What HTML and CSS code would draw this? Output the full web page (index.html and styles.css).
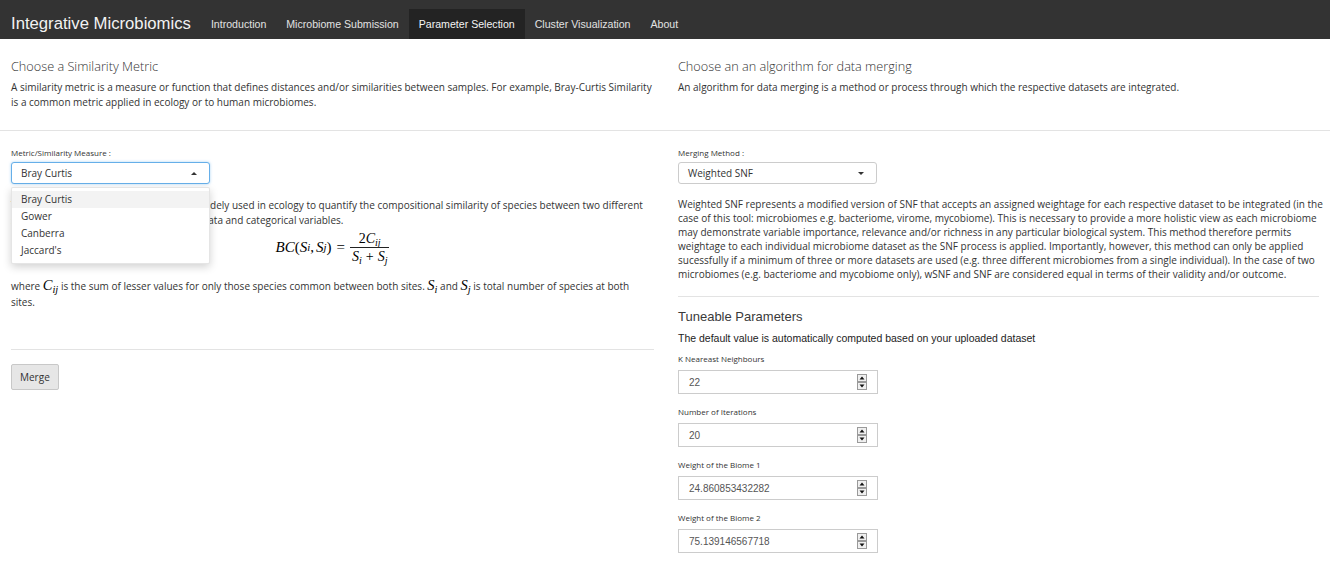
FILE: index.html
```html
<!DOCTYPE html>
<html lang="en">
<head>
<meta charset="utf-8">
<title>Integrative Microbiomics</title>
<link rel="stylesheet" href="styles.css">
</head>
<body>
<nav class="navbar">
  <span class="brand">Integrative Microbiomics</span>
  <ul class="nav">
    <li>Introduction</li>
    <li>Microbiome Submission</li>
    <li class="active">Parameter Selection</li>
    <li>Cluster Visualization</li>
    <li>About</li>
  </ul>
</nav>

<main class="page">
  <div class="row top-row">
    <section class="col col-left">
      <h4 class="title">Choose a Similarity Metric</h4>
      <p class="text">A similarity metric is a measure or function that defines distances and/or similarities between samples. For example, Bray-Curtis Similarity is a common metric applied in ecology or to human microbiomes.</p>
    </section>
    <section class="col col-right">
      <h4 class="title">Choose an an algorithm for data merging</h4>
      <p class="text">An algorithm for data merging is a method or process through which the respective datasets are integrated.</p>
    </section>
  </div>

  <hr class="rule-full">

  <div class="row bottom-row">
    <section class="col col-left">
      <label class="field-label">Metric/Similarity Measure :</label>
      <div class="select-wrap">
        <div class="select focused"><span>Bray Curtis</span><span class="caret up"></span></div>
        <ul class="menu">
          <li class="hover">Bray Curtis</li>
          <li>Gower</li>
          <li>Canberra</li>
          <li>Jaccard's</li>
        </ul>
      </div>
      <p class="text desc">The Bray-Curtis dissimilarity is a statistic widely used in ecology to quantify the compositional similarity of species between two different sites, and it is well suited for a numerical data and categorical variables.</p>
      <div class="formula">
        <span class="mi">BC</span><span class="mo">(</span><span class="mi">S</span><sub>i</sub><span class="mo comma">,</span><span class="mi">S</span><sub>j</sub><span class="mo">)</span><span class="mo eq">=</span><span class="frac"><span class="num">2<span class="mi">C</span><sub>ij</sub></span><span class="den"><span class="mi">S</span><sub>i</sub><span class="mo plus">+</span><span class="mi">S</span><sub>j</sub></span></span>
      </div>
      <p class="text where">where <span class="imath"><span class="mi">C</span><sub>ij</sub></span> is the sum of lesser values for only those species common between both sites. <span class="imath"><span class="mi">S</span><sub>i</sub></span> and <span class="imath"><span class="mi">S</span><sub>j</sub></span> is total number of species at both sites.</p>
      <hr class="rule-col">
      <button class="btn">Merge</button>
    </section>

    <section class="col col-right">
      <label class="field-label">Merging Method :</label>
      <div class="select"><span>Weighted SNF</span><span class="caret down"></span></div>
      <p class="text desc2">Weighted SNF represents a modified version of SNF that accepts an assigned weightage for each respective dataset to be integrated (in the case of this tool: microbiomes e.g. bacteriome, virome, mycobiome). This is necessary to provide a more holistic view as each microbiome may demonstrate variable importance, relevance and/or richness in any particular biological system. This method therefore permits weightage to each individual microbiome dataset as the SNF process is applied. Importantly, however, this method can only be applied sucessfully if a minimum of three or more datasets are used (e.g. three different microbiomes from a single individual). In the case of two microbiomes (e.g. bacteriome and mycobiome only), wSNF and SNF are considered equal in terms of their validity and/or outcome.</p>
      <hr class="rule-col rule-right">
      <h4 class="subtitle">Tuneable Parameters</h4>
      <p class="hint">The default value is automatically computed based on your uploaded dataset</p>

      <div class="group first">
        <label class="field-label">K Neareast Neighbours</label>
        <div class="num-input"><span class="val">22</span><svg class="spin" width="10" height="16" viewBox="0 0 10 16"><rect x="0.5" y="0.5" width="9" height="7" fill="#f0f0f0" stroke="#9a9a9a"/><rect x="0.5" y="8.5" width="9" height="7" fill="#f0f0f0" stroke="#9a9a9a"/><path d="M2.5 5.5 L5 2.5 L7.5 5.5 Z" fill="#111"/><path d="M2.5 10.5 L5 13.5 L7.5 10.5 Z" fill="#111"/></svg></div>
      </div>
      <div class="group">
        <label class="field-label">Number of Iterations</label>
        <div class="num-input"><span class="val">20</span><svg class="spin" width="10" height="16" viewBox="0 0 10 16"><rect x="0.5" y="0.5" width="9" height="7" fill="#f0f0f0" stroke="#9a9a9a"/><rect x="0.5" y="8.5" width="9" height="7" fill="#f0f0f0" stroke="#9a9a9a"/><path d="M2.5 5.5 L5 2.5 L7.5 5.5 Z" fill="#111"/><path d="M2.5 10.5 L5 13.5 L7.5 10.5 Z" fill="#111"/></svg></div>
      </div>
      <div class="group">
        <label class="field-label">Weight of the Biome 1</label>
        <div class="num-input"><span class="val">24.860853432282</span><svg class="spin" width="10" height="16" viewBox="0 0 10 16"><rect x="0.5" y="0.5" width="9" height="7" fill="#f0f0f0" stroke="#9a9a9a"/><rect x="0.5" y="8.5" width="9" height="7" fill="#f0f0f0" stroke="#9a9a9a"/><path d="M2.5 5.5 L5 2.5 L7.5 5.5 Z" fill="#111"/><path d="M2.5 10.5 L5 13.5 L7.5 10.5 Z" fill="#111"/></svg></div>
      </div>
      <div class="group">
        <label class="field-label">Weight of the Biome 2</label>
        <div class="num-input"><span class="val">75.139146567718</span><svg class="spin" width="10" height="16" viewBox="0 0 10 16"><rect x="0.5" y="0.5" width="9" height="7" fill="#f0f0f0" stroke="#9a9a9a"/><rect x="0.5" y="8.5" width="9" height="7" fill="#f0f0f0" stroke="#9a9a9a"/><path d="M2.5 5.5 L5 2.5 L7.5 5.5 Z" fill="#111"/><path d="M2.5 10.5 L5 13.5 L7.5 10.5 Z" fill="#111"/></svg></div>
      </div>
    </section>
  </div>
</main>
</body>
</html>
```

FILE: styles.css
```css
* { box-sizing: border-box; }

body {
  margin: 0;
  font-family: "Open Sans", "DejaVu Sans", sans-serif;
  font-size: 10px;
  color: #333;
  background: #fff;
}

/* Navbar */
.navbar {
  display: flex;
  height: 39px;
  padding-top: 9px;
  background: #333;
  font-family: "Liberation Sans", Arial, sans-serif;
}
.brand {
  padding: 0 10px 0 11px;
  font-size: 16.7px;
  line-height: 30px;
  color: #f2f2f2;
}
.nav {
  display: flex;
  list-style: none;
  margin: 0;
  padding: 0;
}
.nav li {
  padding: 0 10px;
  font-size: 10.6px;
  line-height: 30px;
  color: #e2e2e2;
}
.nav li.active {
  background: #232323;
  color: #f4f4f4;
}

/* Layout */
.row {
  display: grid;
  grid-template-columns: 1fr 1fr;
}
.col {
  min-width: 0;
}
.col-left { padding: 0 11px 0 11px; }
.col-right { padding: 0 5px 0 13px; }
.top-row { padding-top: 19px; }
.bottom-row { padding-top: 16px; }

.title {
  margin: 0 0 6px;
  font-size: 12.7px;
  font-weight: 300;
  line-height: 16px;
  color: #333;
}
.text {
  margin: 0;
  line-height: 14.5px;
}
.rule-full {
  margin: 21px 0 0;
  border: 0;
  border-top: 1px solid #e3e3e3;
}

/* Form controls */
.field-label {
  display: block;
  font-size: 8px;
  line-height: 12px;
  margin-bottom: 3px;
}
.select-wrap { position: relative; }
.select {
  display: flex;
  align-items: center;
  justify-content: space-between;
  width: 199px;
  height: 22px;
  padding: 0 12px 0 9px;
  border: 1px solid #ccc;
  border-radius: 3px;
  background: #fff;
  font-size: 10px;
  color: #333;
}
.select.focused {
  border-color: #66afe9;
  box-shadow: 0 0 3px rgba(102, 175, 233, 0.55);
}
.caret {
  width: 0;
  height: 0;
  border-left: 3px solid transparent;
  border-right: 3px solid transparent;
}
.caret.down { border-top: 3px solid #333; }
.caret.up { border-bottom: 3px solid #333; }

.menu {
  position: absolute;
  top: 25px;
  left: 0;
  z-index: 5;
  width: 199px;
  margin: 0;
  padding: 3px 0 4px;
  list-style: none;
  background: #fff;
  border: 1px solid rgba(0, 0, 0, 0.1);
  border-radius: 2px;
  box-shadow: 0 3px 8px rgba(0, 0, 0, 0.18);
}
.menu li {
  padding: 0 9px;
  font-size: 10px;
  line-height: 17px;
  color: #333;
}
.menu li.hover { background: #f3f3f3; }

.desc { margin-top: 14px; }

/* Math */
.formula {
  display: flex;
  justify-content: center;
  align-items: center;
  height: 30px;
  margin-top: 5px;
  font-family: "Liberation Serif", "DejaVu Serif", serif;
  font-size: 15px;
  color: #000;
}
.mi { font-style: italic; }
.formula sub, .imath sub {
  font-size: 0.72em;
  font-style: italic;
  vertical-align: -0.3em;
  line-height: 0;
}
.mo.comma { margin-right: 2px; }
.mo.eq { margin: 0 5px 0 5px; }
.frac {
  display: inline-flex;
  flex-direction: column;
  align-items: center;
  font-size: 14px;
}
.num {
  padding: 0 3px 1px;
  line-height: 15px;
}
.den {
  padding: 1px 2px 0;
  border-top: 1px solid #222;
  line-height: 15px;
}
.mo.plus { margin: 0 4px; }

.where {
  margin-top: 15px;
  line-height: 16px;
}
.imath {
  font-family: "Liberation Serif", "DejaVu Serif", serif;
  font-size: 14.5px;
  color: #000;
}

.rule-col {
  margin: 39px 0 0;
  border: 0;
  border-top: 1px solid #e3e3e3;
}
.btn {
  margin-top: 14px;
  height: 26px;
  padding: 0 8px;
  font-family: "Open Sans", sans-serif;
  font-size: 10px;
  color: #333;
  background: #e6e6e6;
  border: 1px solid #c8c8c8;
  border-radius: 2px;
}

/* Right column */
.desc2 {
  margin-top: 13px;
  line-height: 14px;
}
.rule-right { margin-top: 15px; margin-right: 6px; }
.subtitle {
  margin: 12px 0 0;
  font-family: "Liberation Sans", Arial, sans-serif;
  font-size: 13px;
  font-weight: normal;
  line-height: 16px;
  color: #3a3a3a;
}
.hint {
  margin: 6px 0 0;
  font-family: "Liberation Sans", Arial, sans-serif;
  font-size: 10.5px;
  line-height: 14px;
  color: #222;
}
.group { margin-top: 12px; }
.group.first { margin-top: 8px; }
.group .field-label { margin-bottom: 5px; }
.num-input {
  display: flex;
  align-items: center;
  justify-content: space-between;
  width: 200px;
  height: 24px;
  padding: 0 10px;
  border: 1px solid #ccc;
  background: #fff;
  font-family: "Liberation Sans", Arial, sans-serif;
  font-size: 10px;
  color: #555;
}
.spin { display: block; }
```
